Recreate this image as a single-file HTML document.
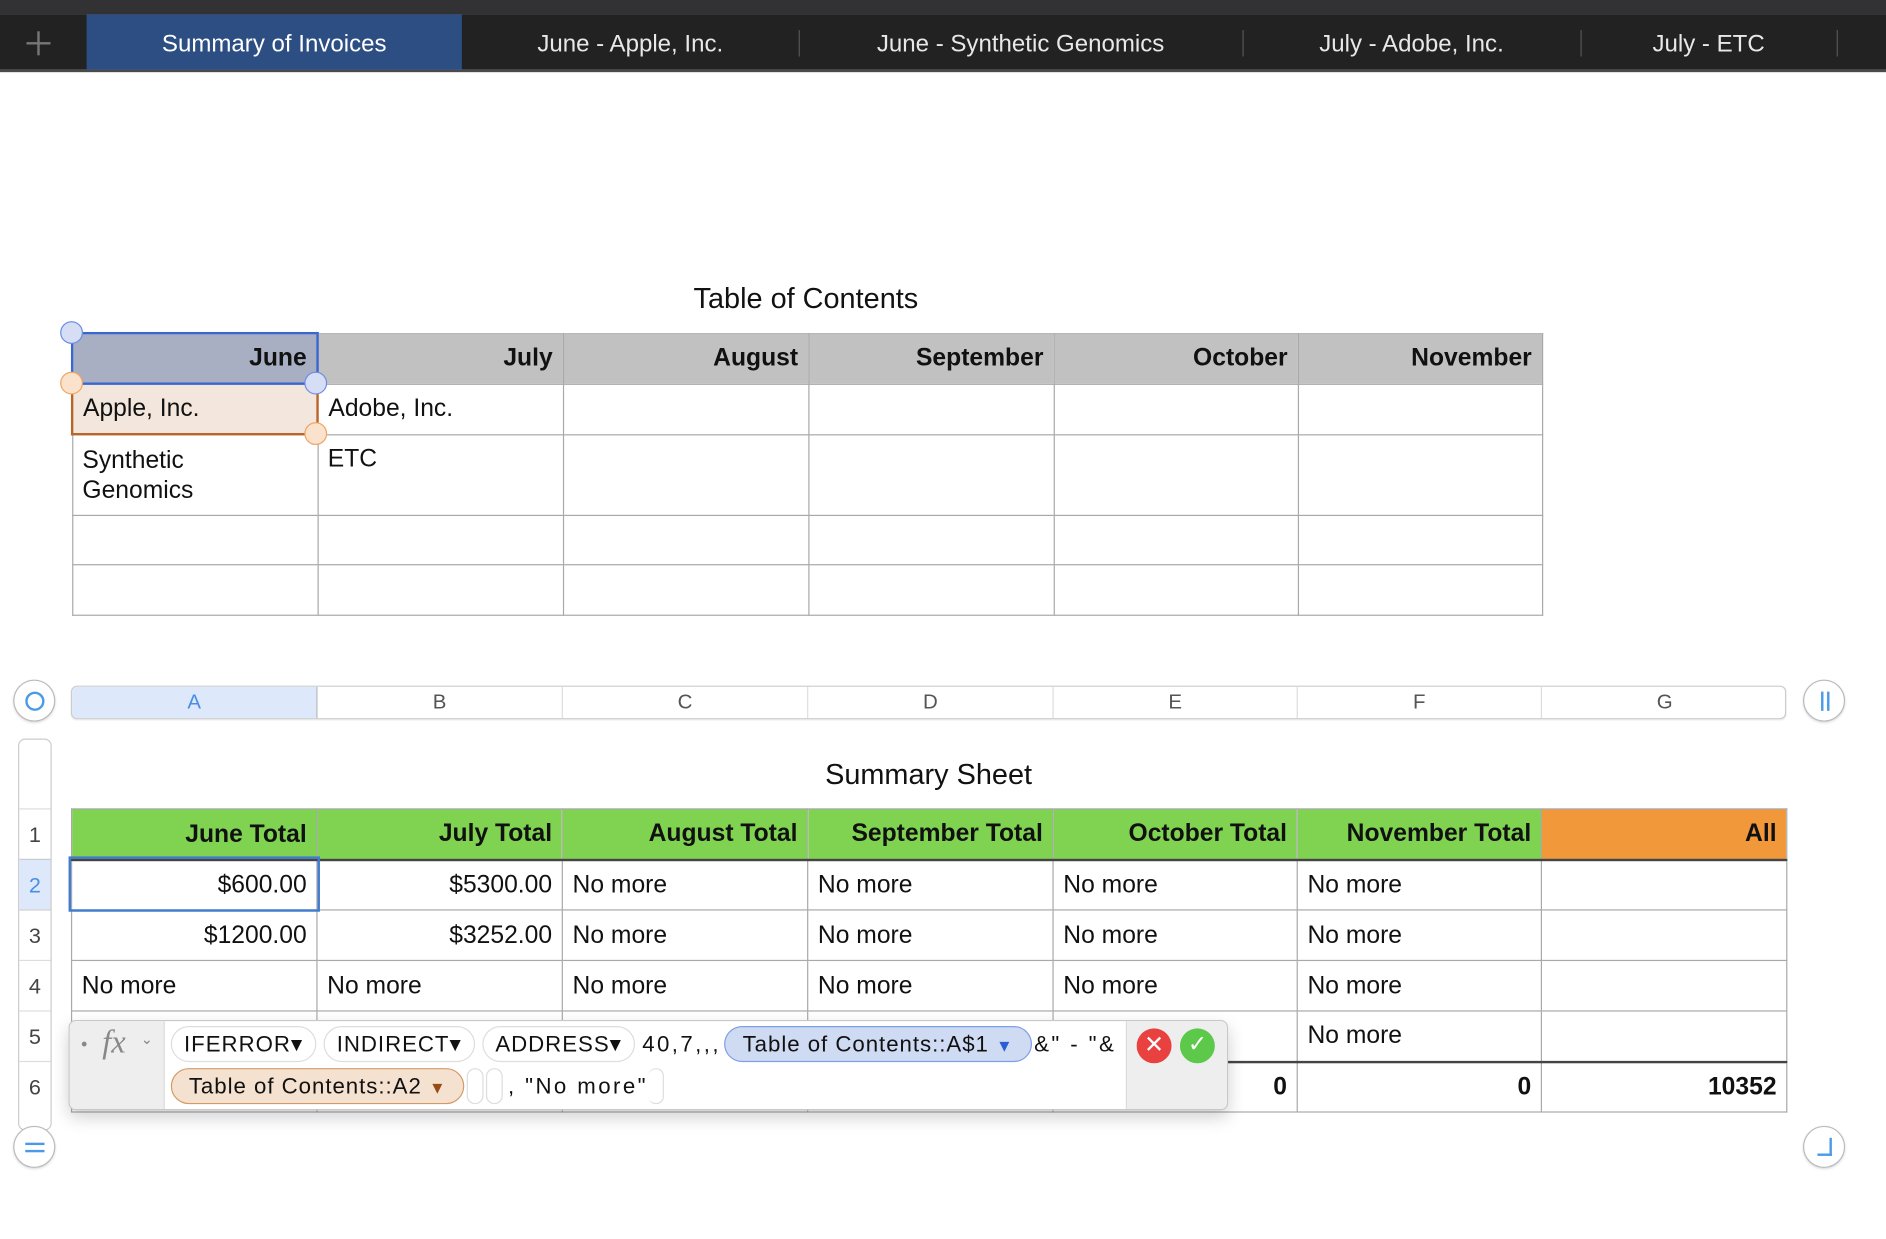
<!DOCTYPE html>
<html><head><meta charset="utf-8"><style>
*{margin:0;padding:0;box-sizing:border-box}
html,body{width:1886px;height:1238px;overflow:hidden;background:#fff}
#w{position:absolute;left:0;top:0;width:1568px;height:1030px;transform:scale(1.20281);transform-origin:0 0;font-family:"Liberation Sans",Arial,sans-serif;color:#111}
.a{position:absolute}
.tab{position:absolute;top:12px;height:46px;line-height:51px;font-size:20px;color:#e8e8e8;text-align:center}
.sep{position:absolute;top:25px;width:1px;height:22px;background:#555}
table{position:absolute;border-collapse:collapse;table-layout:fixed;font-size:20.5px}
td{border:1px solid #a9a9a9;padding:0 8px;overflow:hidden;white-space:nowrap}
.h td{font-weight:bold;text-align:right;vertical-align:middle}
.r{text-align:right}
.circ{position:absolute;border:1px solid #bbb;border-radius:50%;background:#fff;box-shadow:0 1px 2px rgba(0,0,0,.15)}
.pill{display:inline-block;height:30px;line-height:28px;border:1px solid #ddd;border-radius:15px;padding:0 10px;margin-right:6px;background:#fff;font-size:18.5px;vertical-align:middle}
</style></head><body><div id="w">
<div class="a" style="left:0;top:0;width:1568px;height:12px;background:#323234"></div>
<div class="a" style="left:0;top:12px;width:1568px;height:46px;background:#222"></div>
<div class="a" style="left:0;top:58px;width:1568px;height:2px;background:#4a4a4a"></div>
<div class="a" style="left:22px;top:35px;width:20px;height:1.5px;background:#777"></div>
<div class="a" style="left:31px;top:26px;width:1.5px;height:20px;background:#777"></div>
<div class="tab" style="left:72px;width:312px;background:#2c4e83;color:#fff">Summary of Invoices</div>
<div class="tab" style="left:384px;width:280px">June - Apple, Inc.</div><div class="sep" style="left:664px"></div>
<div class="tab" style="left:664px;width:369px">June - Synthetic Genomics</div><div class="sep" style="left:1033px"></div>
<div class="tab" style="left:1033px;width:281px">July - Adobe, Inc.</div><div class="sep" style="left:1314px"></div>
<div class="tab" style="left:1314px;width:213px">July - ETC</div><div class="sep" style="left:1527px"></div>

<div class="a" style="left:59px;width:1222px;top:235px;text-align:center;font-size:24px">Table of Contents</div>
<table style="left:59px;top:276px;width:1222px">
<colgroup><col style="width:204px"><col style="width:204px"><col style="width:204px"><col style="width:204px"><col style="width:203px"><col style="width:203px"></colgroup>
<tr class="h" style="height:42px;background:#c0c1c0"><td style="background:#a9afc2;border:2px solid #3a66d0">June</td><td>July</td><td>August</td><td>September</td><td>October</td><td>November</td></tr>
<tr style="height:42px"><td style="background:#f3e7dd;border:2px solid #b8652a">Apple, Inc.</td><td>Adobe, Inc.</td><td></td><td></td><td></td><td></td></tr>
<tr style="height:67px;vertical-align:top"><td style="padding-top:8px;white-space:normal;line-height:25px">Synthetic<br>Genomics</td><td style="padding-top:8px">ETC</td><td></td><td></td><td></td><td></td></tr>
<tr style="height:41px"><td></td><td></td><td></td><td></td><td></td><td></td></tr>
<tr style="height:42px"><td></td><td></td><td></td><td></td><td></td><td></td></tr>
</table>
<div class="circ" style="left:50px;top:267px;width:19px;height:19px;background:#d6def5;border-color:#6f8de0;box-shadow:none"></div>
<div class="circ" style="left:253px;top:309px;width:19px;height:19px;background:#d6def5;border-color:#6f8de0;box-shadow:none"></div>
<div class="circ" style="left:50px;top:309px;width:19px;height:19px;background:#fae2cc;border-color:#f0a560;box-shadow:none"></div>
<div class="circ" style="left:253px;top:351px;width:19px;height:19px;background:#fae2cc;border-color:#f0a560;box-shadow:none"></div>

<div class="a" style="left:59px;top:570px;width:1426px;height:28px;border:1px solid #ccc;border-radius:5px;box-shadow:0 1px 1px rgba(0,0,0,.08);overflow:hidden;font-size:17px;color:#555;line-height:26px">
<div class="a" style="left:0;top:0;width:204px;height:26px;background:#dde9fb;color:#4a8de8;text-align:center;border-right:1px solid #bbb">A</div>
<div class="a" style="left:204px;width:204px;text-align:center;border-right:1px solid #ddd;height:26px">B</div>
<div class="a" style="left:408px;width:204px;text-align:center;border-right:1px solid #ddd;height:26px">C</div>
<div class="a" style="left:612px;width:204px;text-align:center;border-right:1px solid #ddd;height:26px">D</div>
<div class="a" style="left:816px;width:203px;text-align:center;border-right:1px solid #ddd;height:26px">E</div>
<div class="a" style="left:1019px;width:203px;text-align:center;border-right:1px solid #ddd;height:26px">F</div>
<div class="a" style="left:1222px;width:204px;text-align:center;height:26px">G</div>
</div>
<div class="circ" style="left:11px;top:565px;width:35px;height:35px"><div class="a" style="left:9px;top:9px;width:16px;height:16px;border:2px solid #4a9ae8;border-radius:50%"></div></div>
<div class="circ" style="left:1499px;top:565px;width:35px;height:35px"><div class="a" style="left:14px;top:9px;width:2px;height:16px;background:#4a9ae8"></div><div class="a" style="left:19px;top:9px;width:2px;height:16px;background:#4a9ae8"></div></div>

<div class="a" style="left:15px;top:614px;width:28px;height:326px;border:1px solid #ccc;border-radius:6px;overflow:hidden;font-size:18px;color:#444;text-align:center">
<div class="a" style="left:0;top:57px;width:26px;height:42px;line-height:42px;border-top:1px solid #ddd">1</div>
<div class="a" style="left:0;top:99px;width:26px;height:42px;line-height:42px;border-top:1px solid #ccc;background:#dde9fb;color:#4a8de8">2</div>
<div class="a" style="left:0;top:141px;width:26px;height:42px;line-height:42px;border-top:1px solid #ccc">3</div>
<div class="a" style="left:0;top:183px;width:26px;height:42px;line-height:42px;border-top:1px solid #ddd">4</div>
<div class="a" style="left:0;top:225px;width:26px;height:42px;line-height:42px;border-top:1px solid #ddd">5</div>
<div class="a" style="left:0;top:267px;width:26px;height:42px;line-height:42px;border-top:1px solid #ddd">6</div>
</div>

<div class="a" style="left:59px;width:1426px;top:631px;text-align:center;font-size:24px">Summary Sheet</div>
<table style="left:59px;top:672px;width:1426px">
<colgroup><col style="width:204px"><col style="width:204px"><col style="width:204px"><col style="width:204px"><col style="width:203px"><col style="width:203px"><col style="width:204px"></colgroup>
<tr class="h" style="height:42px;background:#7fd350"><td style="padding-top:2px">June Total</td><td>July Total</td><td>August Total</td><td>September Total</td><td>October Total</td><td>November Total</td><td style="background:#f0983a">All</td></tr>
<tr style="height:42px;border-top:2px solid #444"><td class="r">$600.00</td><td class="r">$5300.00</td><td>No more</td><td>No more</td><td>No more</td><td>No more</td><td></td></tr>
<tr style="height:42px"><td class="r">$1200.00</td><td class="r">$3252.00</td><td>No more</td><td>No more</td><td>No more</td><td>No more</td><td></td></tr>
<tr style="height:42px"><td>No more</td><td>No more</td><td>No more</td><td>No more</td><td>No more</td><td>No more</td><td></td></tr>
<tr style="height:42px"><td></td><td></td><td></td><td></td><td></td><td>No more</td><td></td></tr>
<tr style="height:42px;border-top:2px solid #444;font-weight:bold"><td></td><td></td><td></td><td></td><td class="r">0</td><td class="r">0</td><td class="r">10352</td></tr>
</table>
<div class="a" style="left:57px;top:712px;width:209px;height:46px;border:2px solid #3f7bd0"></div>

<div class="a" style="left:57px;top:848px;width:964px;height:75px;background:#fff;border:1px solid #c8c8c8;border-radius:6px;box-shadow:0 6px 14px rgba(0,0,0,.18);overflow:hidden">
<div class="a" style="left:0;top:0;width:79px;height:75px;background:#eee;border-right:1px solid #ddd"></div>
<div class="a" style="left:10px;top:17px;width:4px;height:4px;border-radius:50%;background:#888"></div>
<div class="a" style="left:27px;top:2px;font-size:27px;font-style:italic;color:#888;font-family:'Liberation Serif',serif">fx</div>
<div class="a" style="left:59px;top:8px;font-size:12px;color:#888">⌄</div>
<div class="a" style="left:878px;top:0;width:86px;height:75px;background:#eee;border-left:1px solid #ddd"></div>
<div class="a" style="left:887px;top:6px;width:29px;height:29px;border-radius:50%;background:#e94040;color:#fff;text-align:center;line-height:28px;font-size:20px">✕</div>
<div class="a" style="left:923px;top:6px;width:29px;height:29px;border-radius:50%;background:#5dc94a;color:#fff;text-align:center;line-height:28px;font-size:19px">✓</div>
<div class="a" style="left:84px;top:4px;white-space:nowrap;font-size:18.5px;letter-spacing:.8px">
<span class="pill">IFERROR▾</span><span class="pill">INDIRECT▾</span><span class="pill">ADDRESS▾</span><span style="vertical-align:middle;letter-spacing:2px;margin-right:3px">40,7,,,</span><span class="pill" style="background:#cfdaf3;border-color:#7f9ee5;padding:0 14px;margin-right:2px">Table of Contents::A$1 <span style="color:#2a5fd0;font-size:14px">▼</span></span><span style="vertical-align:middle;letter-spacing:2px">&amp;" - "&amp;</span>
</div>
<div class="a" style="left:84px;top:39px;white-space:nowrap;font-size:18.5px;letter-spacing:.8px">
<span class="pill" style="background:#f5e1cf;border-color:#d39a67;padding:0 14px;margin-right:2px">Table of Contents::A2 <span style="color:#9a4a15;font-size:14px">▼</span></span><span class="pill" style="padding:0 6px;margin-right:2px"></span><span class="pill" style="padding:0 6px;margin-right:4px"></span><span style="vertical-align:middle;letter-spacing:2px">, "No more"</span><span class="pill" style="padding:0 6px;border-left:none"></span>
</div>
</div>

<div class="circ" style="left:11px;top:936px;width:35px;height:35px"><div class="a" style="left:9px;top:13px;width:16px;height:2px;background:#4a9ae8"></div><div class="a" style="left:9px;top:19px;width:16px;height:2px;background:#4a9ae8"></div></div>
<div class="circ" style="left:1499px;top:936px;width:35px;height:35px"><div class="a" style="left:21px;top:9px;width:2px;height:15px;background:#4a9ae8"></div><div class="a" style="left:11px;top:22px;width:12px;height:2px;background:#4a9ae8"></div></div>
</div></body></html>
